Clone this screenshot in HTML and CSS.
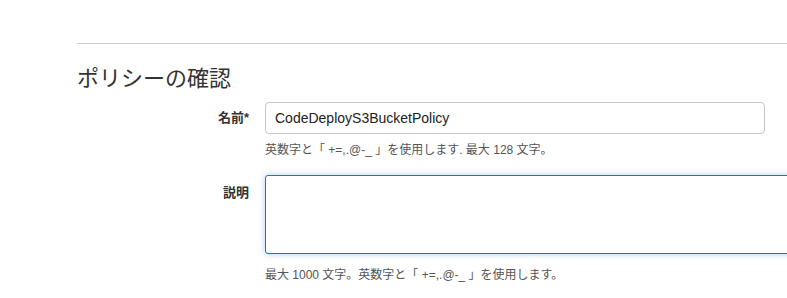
FILE: index.html
```html
<!DOCTYPE html>
<html>
<head>
    <meta charset="UTF-8">
    <title>ポリシーの確認</title>
    <link rel="stylesheet" href="styles.css">
</head>
<body>

<div class="page">
    <div class="prev-step"><span>ステップ 1 ポリシーの作成 ステップ 2</span></div>
    <hr class="rule">
    <h2 class="title">ポリシーの確認</h2>

    <div class="row">
        <label class="label label-name" for="name">名前*</label>
        <div class="field">
            <input id="name" class="input" type="text" value="CodeDeployS3BucketPolicy">
            <p class="hint">英数字と「 +=,.@-_ 」を使用します. 最大 128 文字。</p>
        </div>
    </div>

    <div class="row row-desc">
        <label class="label label-desc" for="desc">説明</label>
        <div class="field">
            <textarea id="desc" class="textarea"></textarea>
            <p class="hint hint-desc">最大 1000 文字。英数字と「 +=,.@-_ 」を使用します。</p>
        </div>
    </div>
</div>

</body>
</html>
```

FILE: styles.css
```css
*{ margin: 0; padding: 0; box-sizing: border-box;}
html, body { overflow: hidden;}
body { background: #fff; color: #333; font-family: "Liberation Sans", "Noto Sans CJK JP", sans-serif; width: 787px; height: 298px;}
.page { padding-left: 77px;}
.prev-step { height: 3px; overflow: hidden; color: #bbb; font-size: 16px; line-height: 20px;}
.prev-step span { display: block; margin-top: -17px; padding-left: 8px;}
.rule { margin-top: 40px; border: 0; border-top: 1px solid #ccc; height: 0;}
.title { margin-top: 20px; font-size: 22px; font-weight: normal; line-height: 30px; color: #333;}
.row { display: grid; grid-template-columns: 172px 1fr; column-gap: 16px; margin-top: 8px;}
.row-desc { margin-top: 17px;}
.label { text-align: right; font-size: 13px; font-weight: bold; line-height: 20px; color: #333;}
.label-name { padding-top: 6px;}
.label-desc { padding-top: 8px;}
.input { display: block; width: 500px; height: 32px; border: 1px solid #c6c6c6; border-radius: 4px; padding: 0 9px; font-family: inherit; font-size: 14px; color: #222; outline: none;}
.textarea { display: block; width: 600px; height: 79px; border: 1px solid #1b74c9; border-radius: 3px; box-shadow: 0 0 6px rgba(27, 116, 201, .35); resize: none; outline: none; font-family: inherit;}
.hint { margin-top: 8px; font-size: 12px; line-height: 16px; color: #555;}
.hint-desc { margin-top: 13px;}
```
